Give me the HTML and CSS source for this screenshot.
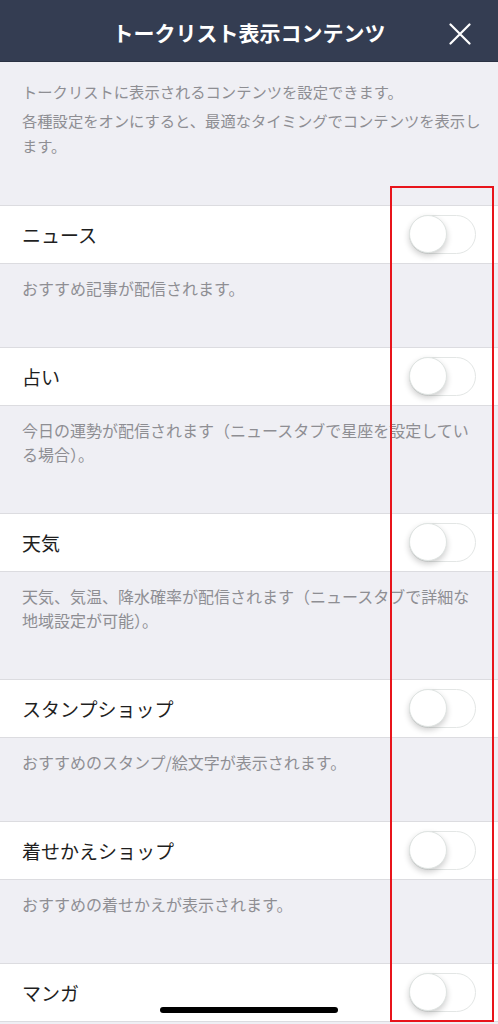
FILE: index.html
```html
<!DOCTYPE html>
<html lang="ja">
<head>
<meta charset="utf-8">
<title>トークリスト表示コンテンツ</title>
<link rel="stylesheet" href="styles.css">
</head>
<body>
<div class="screen">
  <header class="header">
    <h1 class="title">トークリスト表示コンテンツ</h1>
    <svg class="close" width="22" height="22" viewBox="0 0 22 22"><path d="M1.5 1.5 L20.5 20.5 M20.5 1.5 L1.5 20.5" stroke="#fff" stroke-width="2.2" stroke-linecap="round" fill="none"/></svg>
  </header>
  <section class="intro">
    <p>トークリストに表示されるコンテンツを設定できます。</p>
    <p>各種設定をオンにすると、最適なタイミングでコンテンツを表示し<br>ます。</p>
  </section>
  <div class="row"><span class="label">ニュース</span><span class="toggle"><span class="knob"></span></span></div>
  <div class="desc">おすすめ記事が配信されます。</div>
  <div class="row"><span class="label">占い</span><span class="toggle"><span class="knob"></span></span></div>
  <div class="desc">今日の運勢が配信されます（ニュースタブで星座を設定してい<br>る場合）。</div>
  <div class="row"><span class="label">天気</span><span class="toggle"><span class="knob"></span></span></div>
  <div class="desc">天気、気温、降水確率が配信されます（ニュースタブで詳細な<br>地域設定が可能）。</div>
  <div class="row"><span class="label">スタンプショップ</span><span class="toggle"><span class="knob"></span></span></div>
  <div class="desc">おすすめのスタンプ/絵文字が表示されます。</div>
  <div class="row"><span class="label">着せかえショップ</span><span class="toggle"><span class="knob"></span></span></div>
  <div class="desc">おすすめの着せかえが表示されます。</div>
  <div class="row"><span class="label">マンガ</span><span class="toggle"><span class="knob"></span></span></div>
  <div class="home-bar"></div>
  <div class="highlight"></div>
</div>
</body>
</html>
```

FILE: styles.css
```css
* { box-sizing: border-box; }
html, body { margin: 0; padding: 0; }
body {
  background: #efeff4;
  font-family: "Noto Sans CJK JP", "Noto Sans", sans-serif;
}
.screen {
  position: relative;
  width: 498px;
  height: 1024px;
  overflow: hidden;
  background: #efeff4;
}
.header {
  position: relative;
  height: 62px;
  background: #343d52;
  display: flex;
  align-items: center;
  justify-content: center;
  border-bottom: 1px solid #2a3143;
}
.title {
  margin: 0;
  color: #fff;
  font-size: 21px;
  font-weight: 700;
  line-height: 1;
  margin-top: 4px;
}
.close {
  position: absolute;
  right: 27px;
  top: 23px;
}
.intro {
  padding: 17px 8px 47px 22px;
  color: #8e8e93;
  font-size: 15.3px;
  line-height: 25px;
  white-space: nowrap;
}
.intro p { margin: 0; }
.intro p + p { margin-top: 4px; }
.row {
  background: #fff;
  height: 59px;
  border-top: 1px solid #dcdce0;
  border-bottom: 1px solid #dcdce0;
  display: flex;
  align-items: center;
  justify-content: space-between;
  padding: 0 22px;
}
.label {
  font-size: 19px;
  color: #1f1f1f;
  line-height: 1;
}
.toggle {
  position: relative;
  width: 67px;
  height: 39px;
  border-radius: 20px;
  border: 1.5px solid #e3e6e5;
  background: #fff;
}
.knob {
  position: absolute;
  left: -1px;
  top: -1px;
  width: 38px;
  height: 38px;
  border-radius: 50%;
  background: #fff;
  border: 1px solid #dfe4e2;
  box-shadow: 0 3px 6px rgba(0,0,0,0.2);
}
.desc {
  padding: 12px 8px 47px 22px;
  color: #8e8e93;
  font-size: 16px;
  line-height: 24px;
  white-space: nowrap;
}
.home-bar {
  position: absolute;
  left: 160px;
  top: 1007px;
  width: 178px;
  height: 6px;
  border-radius: 3px;
  background: #000;
}
.highlight {
  position: absolute;
  left: 390px;
  top: 186px;
  width: 104px;
  height: 836px;
  border: 2px solid #e8141b;
}
```
